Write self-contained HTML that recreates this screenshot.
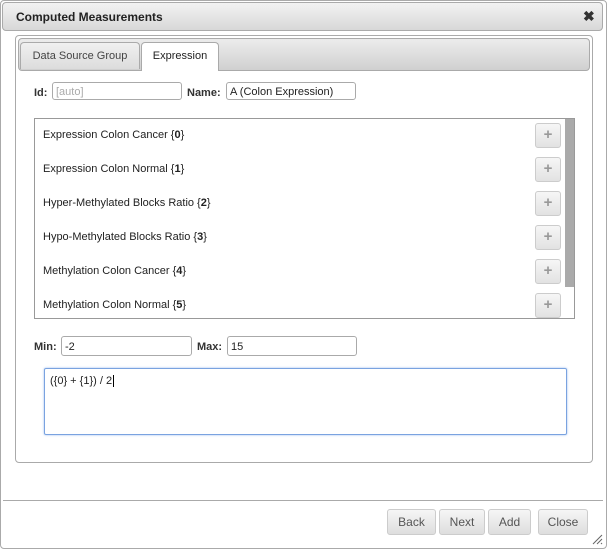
<!DOCTYPE html><html><head><style>
body{margin:0;width:607px;height:549px;background:#fff;font-family:"Liberation Sans",Arial,sans-serif;font-size:11px;color:#222;position:relative;overflow:hidden}
.a{position:absolute}
.dlg{left:0;top:0;width:605px;height:547px;border:1px solid #aaa;border-radius:4px;background:#fff}
.tb{left:2px;top:2px;width:599px;height:27px;border:1px solid #aaa;border-radius:4px;background:linear-gradient(#f2f2f2,#d8d8d8);}
.tb span{position:absolute;left:13px;top:7px;font-weight:bold;font-size:12px;color:#222}
.pnl{left:15px;top:35px;width:576px;height:426px;border:1px solid #aaa;border-radius:4px;background:#fff}
.th{left:18px;top:38px;width:570px;height:31px;border:1px solid #aaa;border-radius:4px;background:linear-gradient(#ececec,#d0d0d0)}
.tab{top:42px;height:26px;border:1px solid #aaa;border-bottom:none;border-radius:4px 4px 0 0;text-align:center;line-height:27px;color:#444}
.inp{height:18px;border:1px solid #aaa;border-radius:3px;background:#fff;line-height:19px;padding-left:3px;box-sizing:border-box}
.lb{font-weight:bold;color:#333}
.list{left:34px;top:118px;width:541px;height:201px;border:1px solid #999;box-sizing:border-box;background:#fff}
.it{left:43px}
.pl{left:535px;width:26px;height:25px;border:1px solid #ccc;border-radius:3px;background:linear-gradient(#f6f6f6,#e2e2e2);box-sizing:border-box;text-align:center;line-height:22px;font-size:15px;font-weight:bold;color:#999}
.btn{top:509px;height:26px;border:1px solid #ccc;border-radius:3px;background:linear-gradient(#f6f6f6,#dedede);box-sizing:border-box;text-align:center;line-height:25px;color:#555;font-size:12px}
</style></head><body>
<div class="a dlg"></div>
<div class="a tb"><span>Computed Measurements</span></div>
<div class="a" style="left:583px;top:8px;font-size:14px;font-weight:bold;color:#333">✖</div>
<div class="a pnl"></div>
<div class="a th"></div>
<div class="a tab" style="left:20px;width:118px;background:linear-gradient(#f0f0f0,#dcdcdc)">Data Source Group</div>
<div class="a tab" style="left:141px;width:76px;background:#fff;height:28px;color:#222">Expression</div>
<div class="a lb" style="left:34px;top:87px">Id:</div>
<div class="a inp" style="left:52px;top:82px;width:130px;color:#aaa">[auto]</div>
<div class="a lb" style="left:187px;top:87px">Name:</div>
<div class="a inp" style="left:226px;top:82px;width:130px">A (Colon Expression)</div>
<div class="a list"></div>
<div class="a" style="left:565px;top:119px;width:9px;height:168px;background:#aaa"></div>
<div class="a it" style="top:129px">Expression Colon Cancer {<b>0</b>}</div>
<div class="a it" style="top:163px">Expression Colon Normal {<b>1</b>}</div>
<div class="a it" style="top:197px">Hyper-Methylated Blocks Ratio {<b>2</b>}</div>
<div class="a it" style="top:231px">Hypo-Methylated Blocks Ratio {<b>3</b>}</div>
<div class="a it" style="top:265px">Methylation Colon Cancer {<b>4</b>}</div>
<div class="a it" style="top:299px">Methylation Colon Normal {<b>5</b>}</div>
<div class="a pl" style="top:123px">+</div>
<div class="a pl" style="top:157px">+</div>
<div class="a pl" style="top:191px">+</div>
<div class="a pl" style="top:225px">+</div>
<div class="a pl" style="top:259px">+</div>
<div class="a pl" style="top:293px">+</div>
<div class="a lb" style="left:34px;top:341px">Min:</div>
<div class="a inp" style="left:61px;top:336px;width:131px;height:20px;line-height:21px">-2</div>
<div class="a lb" style="left:197px;top:341px">Max:</div>
<div class="a inp" style="left:227px;top:336px;width:130px;height:20px;line-height:21px">15</div>
<div class="a" style="left:44px;top:368px;width:523px;height:67px;border:1px solid #7aa3e0;border-radius:2px;box-sizing:border-box;box-shadow:0 0 2px #9bbcf0;padding:6px 0 0 5px">({0} + {1}) / 2<span style="border-left:1px solid #000;margin-left:1px"></span></div>
<div class="a" style="left:3px;top:500px;width:600px;height:1px;background:#aaa"></div>
<div class="a btn" style="left:387px;width:49px">Back</div>
<div class="a btn" style="left:439px;width:46px">Next</div>
<div class="a btn" style="left:488px;width:43px">Add</div>
<div class="a btn" style="left:538px;width:50px">Close</div>
<svg class="a" style="left:591px;top:533px" width="12" height="12"><path d="M2 11L11 2M6 11L11 6M10 11L11 10" stroke="#666" stroke-width="1"/></svg>
</body></html>
